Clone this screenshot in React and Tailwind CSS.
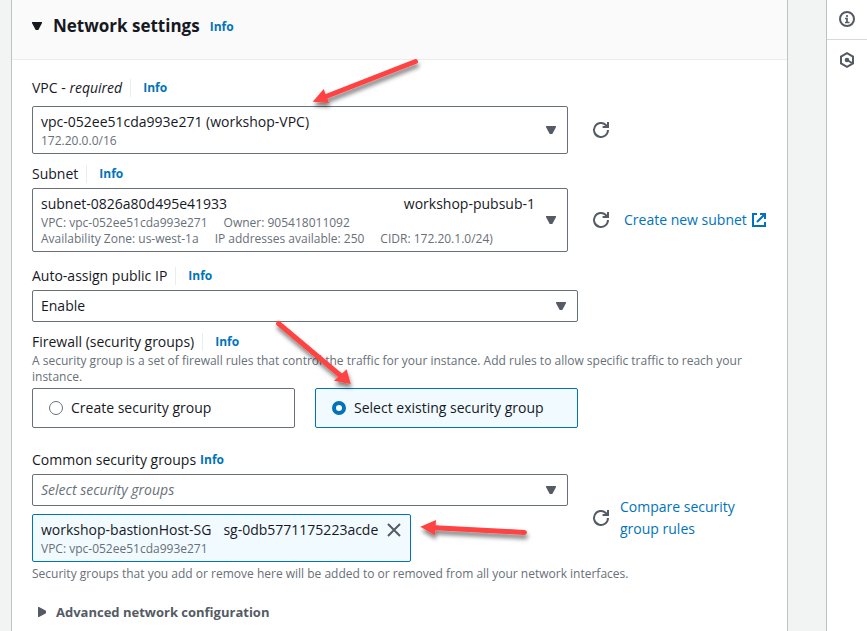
const FONT = "font-['Open_Sans','Noto_Sans',sans-serif]";

function InfoLink() {
  return (
    <a href="#info" className="text-xs font-bold leading-[22px] text-[#0073bb]">
      Info
    </a>
  );
}

function Divider() {
  return <span className="h-[18px] w-px bg-[#eaeded]" />;
}

function Caret({ className = "" }) {
  return (
    <svg aria-hidden="true" width="12" height="10" viewBox="0 0 12 10" className={`shrink-0 ${className}`}>
      <path d="M1 1h10v1L7.300 9H4.700L1 2z" fill="currentColor" />
    </svg>
  );
}

function RefreshIcon() {
  return (
    <svg aria-hidden="true" width="18" height="18" viewBox="0 0 18 18" fill="none" stroke="currentColor" strokeWidth="2">
      <path d="M16 9a7 7 0 1 1-2.200-5.100L15.500 5.500" />
      <path d="M16 1v5h-5.400" />
    </svg>
  );
}

function RefreshButton({ label }) {
  return (
    <button type="button" aria-label={label} className="flex size-[18px] shrink-0 items-center justify-center text-[#545b64]">
      <RefreshIcon />
    </button>
  );
}

function ExternalIcon() {
  return (
    <svg aria-hidden="true" width="16" height="16" viewBox="0 0 16 16" fill="none" stroke="currentColor" strokeWidth="2">
      <path d="M6 2H2v12h12v-4" />
      <path d="M9 2h5v5M14 2L6 10" />
    </svg>
  );
}

function RadioCard({ label, selected }) {
  return (
    <label
      className={`flex h-10 flex-1 items-center gap-2 rounded-[2px] border px-4 ${
        selected ? "border-[#0073bb] bg-[#f1faff]" : "border-[#687078] bg-white"
      }`}
    >
      <input
        type="radio"
        name="firewall"
        defaultChecked={selected}
        className="size-[14px] appearance-none rounded-full border border-[#687078] bg-white checked:border-4 checked:border-[#0073bb]"
      />
      {label}
    </label>
  );
}

function Arrows() {
  return (
    <svg aria-hidden="true" width="867" height="631" viewBox="0 0 867 631" className="pointer-events-none absolute left-0 top-0">
      <defs>
        <filter id="arrow-shadow" x="-20%" y="-50%" width="140%" height="220%">
          <feDropShadow dx="1" dy="4" stdDeviation="2" floodColor="#000" floodOpacity="0.5" />
        </filter>
      </defs>
      <g fill="#ff4242" stroke="#ff4242" filter="url(#arrow-shadow)">
        <path d="M326 96.500L415.500 61.500" strokeWidth="5" strokeLinecap="round" />
        <path d="M312.700 101.700L323.700 89L329 103z" stroke="none" />
        <path d="M278.500 323.500L341 376" strokeWidth="5" strokeLinecap="round" />
        <path d="M350.700 384L346.700 369.300L334 380.700z" stroke="none" />
        <path d="M435 527.700L524.500 532.400" strokeWidth="5" strokeLinecap="round" />
        <path d="M420.300 526.700L436 520L435 535.300z" stroke="none" />
      </g>
    </svg>
  );
}

const trigger = "flex w-full items-center justify-between rounded-[2px] border border-[#687078] bg-white pl-2 pr-[10px] text-left";
const field = "w-full min-w-0 max-w-[536px]";
const select = "h-8 w-full appearance-none rounded-[2px] border border-[#687078] bg-white px-2 leading-[22px]";
const hint = "text-xs leading-4 text-[#687078]";

export default function App() {
  return (
    <div className={`relative flex h-screen overflow-hidden bg-[#f2f3f3] text-sm leading-[22px] text-[#16191f] ${FONT}`}>
      <main className="ml-[11px] mr-[38px] min-w-0 flex-1 border-x border-[#bcc3c6] bg-white">
        <header className="flex h-[60px] items-baseline gap-[10px] border-b border-[#eaeded] bg-[#fafafa] px-5 pt-[15px]">
          <button type="button" className="flex items-center gap-[10px] text-[17px] font-bold">
            <Caret className="-ml-px" />
            <h2>Network settings</h2>
          </button>
          <InfoLink />
        </header>

        <div className="px-5 pt-4">
          <section>
            <div className="flex items-center gap-2 pb-[7px]">
              <label htmlFor="vpc">
                VPC - <em>required</em>
              </label>
              <Divider />
              <span className="pl-1"><InfoLink /></span>
            </div>
            <div className="flex items-center gap-6">
              <div className={field}>
                <button id="vpc" type="button" aria-haspopup="listbox" className={`h-12 ${trigger}`}>
                  <span>
                    <span className="block">vpc-052ee51cda993e271 (workshop-VPC)</span>
                    <span className={`block ${hint}`}>172.20.0.0/16</span>
                  </span>
                  <Caret className="text-[#545b64]" />
                </button>
              </div>
              <RefreshButton label="Refresh VPCs" />
            </div>
          </section>

          <section className="pt-2">
            <div className="flex items-center gap-2 pb-[3px]">
              <label htmlFor="subnet">Subnet</label>
              <Divider />
              <span className="pl-1"><InfoLink /></span>
            </div>
            <div className="flex items-center gap-6">
              <div className={field}>
                <button id="subnet" type="button" aria-haspopup="listbox" className={`h-16 gap-[10px] ${trigger}`}>
                  <span className="flex-1">
                    <span className="flex justify-between">
                      <span>subnet-0826a80d495e41933</span>
                      <span>workshop-pubsub-1</span>
                    </span>
                    <span className={`flex gap-4 ${hint}`}>
                      <span>VPC: vpc-052ee51cda993e271</span>
                      <span>Owner: 905418011092</span>
                    </span>
                    <span className={`flex gap-4 ${hint}`}>
                      <span>Availability Zone: us-west-1a</span>
                      <span>IP addresses available: 250</span>
                      <span>CIDR: 172.20.1.0/24)</span>
                    </span>
                  </span>
                  <Caret className="text-[#545b64]" />
                </button>
              </div>
              <div className="flex items-center gap-[14px]">
                <RefreshButton label="Refresh subnets" />
                <a href="#subnet" className="flex items-center gap-1 whitespace-nowrap text-[#0073bb]">
                  Create new subnet
                  <ExternalIcon />
                </a>
              </div>
            </div>
          </section>

          <section className="pt-3">
            <div className="flex items-center gap-2 pb-[3px]">
              <label htmlFor="public-ip">Auto-assign public IP</label>
              <Divider />
              <span className="pl-1"><InfoLink /></span>
            </div>
            <div className="relative max-w-[546px]">
              <select id="public-ip" className={select} defaultValue="Enable">
                <option>Enable</option>
                <option>Disable</option>
              </select>
              <Caret className="pointer-events-none absolute right-[11px] top-[11px] text-[#545b64]" />
            </div>
          </section>

          <section className="pt-2">
            <div className="flex items-center gap-2">
              <span>Firewall (security groups)</span>
              <Divider />
              <span className="pl-1"><InfoLink /></span>
            </div>
            <p className={`pb-[3px] ${hint}`}>
              A security group is a set of firewall rules that control the traffic for your instance. Add rules to allow specific traffic to reach your
              instance.
            </p>
            <div className="flex max-w-[546px] gap-5">
              <RadioCard label="Create security group" />
              <RadioCard label="Select existing security group" selected />
            </div>
          </section>

          <section className="pt-[21px]">
            <div className="flex items-center gap-1 pb-[3px]">
              <label htmlFor="groups">Common security groups</label>
              <InfoLink />
            </div>
            <div className="flex items-center gap-6">
              <div className={field}>
                <div className="relative">
                  <select id="groups" className={`italic text-[#687078] ${select}`} defaultValue="">
                    <option value="">Select security groups</option>
                  </select>
                  <Caret className="pointer-events-none absolute right-[11px] top-[11px] text-[#545b64]" />
                </div>
                <div className="mt-2 flex h-12 w-fit items-start gap-2 rounded-[2px] border border-[#0073bb] bg-[#f1faff] px-2 pt-1">
                  <div>
                    <div className="flex gap-3">
                      <span>workshop-bastionHost-SG</span>
                      <span>sg-0db5771175223acde</span>
                    </div>
                    <div className={hint}>VPC: vpc-052ee51cda993e271</div>
                  </div>
                  <button type="button" aria-label="Remove workshop-bastionHost-SG" className="flex h-[22px] items-center text-[#545b64]">
                    <svg aria-hidden="true" width="16" height="16" viewBox="0 0 16 16" stroke="currentColor" strokeWidth="2">
                      <path d="M2 2l12 12M14 2L2 14" />
                    </svg>
                  </button>
                </div>
              </div>
              <div className="flex items-center gap-[10px]">
                <RefreshButton label="Refresh security groups" />
                <a href="#compare" className="max-w-[120px] text-[#0073bb]">
                  Compare security group rules
                </a>
              </div>
            </div>
            <p className={`pt-1 ${hint}`}>Security groups that you add or remove here will be added to or removed from all your network interfaces.</p>
          </section>

          <button type="button" className="mt-[19px] flex items-center gap-2 pl-1 text-[13px] font-bold text-[#545b64]">
            <Caret className="-rotate-90" />
            Advanced network configuration
          </button>
        </div>
      </main>

      <aside className="w-[41px] shrink-0 border-l border-[#bcc3c6] bg-white text-[#545b64]">
        <button type="button" aria-label="Info panel" className="flex h-10 w-full items-center justify-center border-b border-[#d5dbdb] pb-px">
          <svg aria-hidden="true" width="16" height="16" viewBox="0 0 16 16" fill="none" stroke="currentColor" strokeWidth="2">
            <circle cx="8" cy="8" r="7" />
            <path d="M8 4v2M6 7.500h2V11M6 11.500h4.500" strokeWidth="1.700" />
          </svg>
        </button>
        <button type="button" aria-label="Tutorials" className="flex h-10 w-full items-center justify-center">
          <svg aria-hidden="true" width="16" height="16" viewBox="0 0 16 16" fill="none" stroke="currentColor" strokeWidth="2">
            <path d="M8 1.200L14 4.600v6.800L8 14.800L2 11.400V4.600z" />
            <circle cx="8" cy="8" r="2.300" fill="currentColor" stroke="none" />
            <path d="M8 8l5 3" />
          </svg>
        </button>
      </aside>

      <Arrows />
    </div>
  );
}
